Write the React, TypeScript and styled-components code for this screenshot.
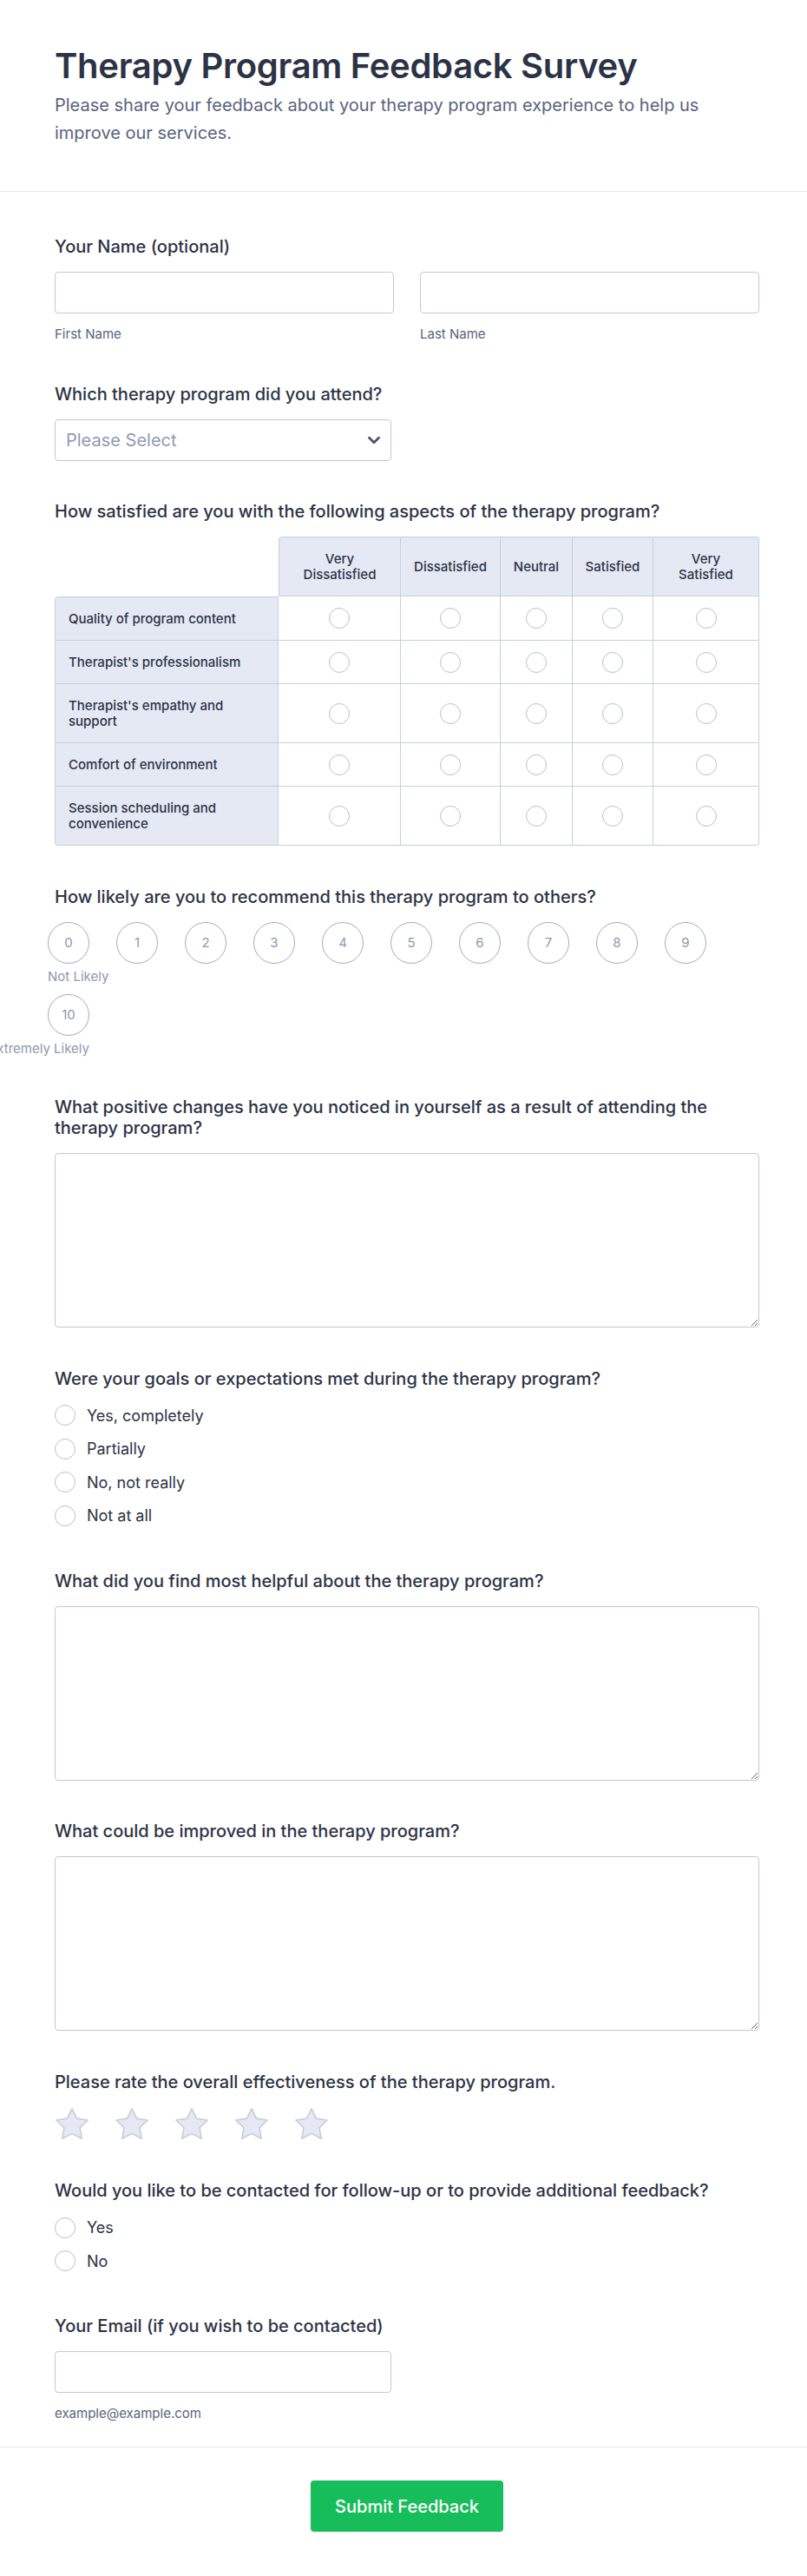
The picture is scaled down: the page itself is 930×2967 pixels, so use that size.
import React from 'react';
import styled, {createGlobalStyle} from 'styled-components';

const GlobalStyle = createGlobalStyle`
  * { box-sizing: border-box; }
  body {
    margin: 0;
    background: #ffffff;
    font-family: Inter, "Noto Sans", "Liberation Sans", sans-serif;
    color: #2c3345;
  }
`;

const Page = styled.div`
  width: 930px;
  background: #ffffff;
`;

const Header = styled.header`
  padding: 52px 55px 51px 63px;
  border-bottom: 1px solid #e3e6ee;
`;

const Title = styled.h1`
  margin: 0;
  font-size: 40px;
  line-height: 48px;
  font-weight: 600;
  letter-spacing: -0.3px;
  color: #2c3345;
`;

const Subtitle = styled.p`
  margin: 5px 0 0;
  font-size: 20px;
  line-height: 32px;
  color: #57647e;
`;

const Form = styled.main`
  display: flex;
  flex-direction: column;
  gap: 46.5px;
  padding: 51px 55px 28px 63px;
`;

const Field = styled.section`
  display: flex;
  flex-direction: column;
`;

const Label = styled.div`
  font-size: 20px;
  line-height: 24px;
  font-weight: 500;
  color: #2c3345;
  margin-bottom: 17px;
`;

const NameRow = styled.div`
  display: grid;
  grid-template-columns: 1fr 1fr;
  gap: 30px;
`;

const Stack = styled.div`
  display: flex;
  flex-direction: column;
`;

const TextInput = styled.input<{$narrow?: boolean}>`
  width: ${(p) => (p.$narrow ? '388px' : '100%')};
  height: 48px;
  padding: 0 12px;
  border: 1px solid #c3c8d6;
  border-radius: 4px;
  font-family: inherit;
  font-size: 18px;
  color: #2c3345;
  background: #fff;
`;

const SubLabel = styled.div`
  margin-top: 14px;
  font-size: 15px;
  line-height: 20px;
  color: #57647e;
`;

const SelectWrap = styled.div`
  position: relative;
  width: 388px;
`;

const Select = styled.select`
  appearance: none;
  width: 100%;
  height: 48px;
  padding: 0 40px 0 12px;
  border: 1px solid #c3c8d6;
  border-radius: 4px;
  background: #fff;
  font-family: inherit;
  font-size: 20px;
  color: #8f9bb0;
`;

const Chevron = styled.svg`
  position: absolute;
  right: 9px;
  top: 13px;
  pointer-events: none;
`;

const Matrix = styled.table`
  width: 100%;
  table-layout: fixed;
  border-collapse: separate;
  border-spacing: 0;
`;

const HeadCell = styled.th<{$first?: boolean; $last?: boolean}>`
  background: #e5e9f4;
  border-top: 1px solid #c8cedf;
  border-right: 1px solid #c8cedf;
  border-bottom: 1px solid #c8cedf;
  border-left: ${(p) => (p.$first ? '1px solid #c8cedf' : 'none')};
  border-top-left-radius: ${(p) => (p.$first ? '4px' : '0')};
  border-top-right-radius: ${(p) => (p.$last ? '4px' : '0')};
  padding: 15.5px 4px;
  font-size: 15px;
  line-height: 18px;
  font-weight: 500;
  color: #2c3345;
  text-align: center;
`;

const Corner = styled.th`
  border: none;
  background: transparent;
`;

const RowLabel = styled.td<{$top?: boolean; $bottom?: boolean}>`
  background: #e5e9f4;
  border-left: 1px solid #c8cedf;
  border-right: 1px solid #c8cedf;
  border-bottom: 1px solid #c8cedf;
  border-top: ${(p) => (p.$top ? '1px solid #c8cedf' : 'none')};
  border-top-left-radius: ${(p) => (p.$top ? '4px' : '0')};
  border-bottom-left-radius: ${(p) => (p.$bottom ? '4px' : '0')};
  padding: 15.5px 15px;
  font-size: 15px;
  line-height: 18px;
  font-weight: 500;
  color: #2c3345;
`;

const RadioCell = styled.td<{$cornerRight?: boolean}>`
  border-right: 1px solid #c8cedf;
  border-bottom: 1px solid #c8cedf;
  border-bottom-right-radius: ${(p) => (p.$cornerRight ? '4px' : '0')};
  text-align: center;
  vertical-align: middle;
  padding: 0;
`;

const Radio = styled.span`
  display: inline-block;
  flex: none;
  width: 24px;
  height: 24px;
  border-radius: 50%;
  border: 1px solid #b9c0cf;
  background: #fff;
  vertical-align: middle;
`;

const Scale = styled.div`
  display: flex;
  flex-wrap: wrap;
  gap: 11px 31px;
  margin-left: -8px;
`;

const ScaleItem = styled.div<{$align: string}>`
  width: 48px;
  display: flex;
  flex-direction: column;
  align-items: ${(p) => p.$align};
`;

const ScaleCircle = styled.div`
  width: 48px;
  height: 48px;
  border-radius: 50%;
  border: 1px solid #a3acc0;
  display: flex;
  align-items: center;
  justify-content: center;
  font-size: 15px;
  color: #8d99ad;
`;

const ScaleHint = styled.div`
  margin-top: 6px;
  font-size: 15px;
  line-height: 18px;
  white-space: nowrap;
  color: #8d99ad;
`;

const TextArea = styled.textarea`
  display: block;
  width: 100%;
  height: 201px;
  padding: 10px 12px;
  border: 1px solid #c3c8d6;
  border-radius: 4px;
  resize: vertical;
  font-family: inherit;
  font-size: 18px;
`;

const RadioList = styled.div`
  display: flex;
  flex-direction: column;
  gap: 11.5px;
  padding-bottom: 3px;
`;

const RadioOption = styled.label`
  display: flex;
  align-items: center;
  gap: 13px;
  font-size: 18px;
  line-height: 27px;
  color: #2c3345;
`;

const Stars = styled.div`
  display: flex;
  gap: 29px;
`;

const Footer = styled.footer`
  display: flex;
  justify-content: center;
  padding: 38px 55px 49px 63px;
  border-top: 1px solid #e6e9f0;
`;

const SubmitButton = styled.button`
  height: 59px;
  padding: 0 28px;
  border: none;
  border-radius: 4px;
  background: #18bd5b;
  color: #ffffff;
  font-family: inherit;
  font-size: 20px;
  font-weight: 500;
`;

const columns = [
  {lines: ['Very', 'Dissatisfied'], width: 141},
  {lines: ['Dissatisfied'], width: 115},
  {lines: ['Neutral'], width: 83},
  {lines: ['Satisfied'], width: 93},
  {lines: ['Very', 'Satisfied'], width: 122},
];

const aspects = [
  'Quality of program content',
  "Therapist's professionalism",
  "Therapist's empathy and support",
  'Comfort of environment',
  'Session scheduling and convenience',
];

const goalOptions = ['Yes, completely', 'Partially', 'No, not really', 'Not at all'];

function Star() {
  return (
    <svg width="40" height="38" viewBox="1 1 22 21">
      <path
        d="M12 2l3.09 6.26L22 9.27l-5 4.87 1.18 6.88L12 17.77l-6.18 3.25L7 14.14 2 9.27l6.91-1.01L12 2z"
        fill="#e6e9f3"
        stroke="#c6ccdc"
        strokeWidth="0.9"
        strokeLinejoin="round"
      />
    </svg>
  );
}

export default function App() {
  return (
    <Page>
      <GlobalStyle />
      <Header>
        <Title>Therapy Program Feedback Survey</Title>
        <Subtitle>
          Please share your feedback about your therapy program experience to help us improve our
          services.
        </Subtitle>
      </Header>

      <Form>
        <Field>
          <Label>Your Name (optional)</Label>
          <NameRow>
            <Stack>
              <TextInput type="text" />
              <SubLabel>First Name</SubLabel>
            </Stack>
            <Stack>
              <TextInput type="text" />
              <SubLabel>Last Name</SubLabel>
            </Stack>
          </NameRow>
        </Field>

        <Field>
          <Label>Which therapy program did you attend?</Label>
          <SelectWrap>
            <Select defaultValue="">
              <option value="">Please Select</option>
            </Select>
            <Chevron width="22" height="22" viewBox="0 0 24 24" fill="none">
              <path d="m6 9 6 6 6-6" stroke="#4a5468" strokeWidth="3" strokeLinecap="round" strokeLinejoin="round" />
            </Chevron>
          </SelectWrap>
        </Field>

        <Field>
          <Label>How satisfied are you with the following aspects of the therapy program?</Label>
          <Matrix>
            <colgroup>
              <col style={{width: 258}} />
              {columns.map((c) => (
                <col key={c.lines.join(' ')} style={{width: c.width}} />
              ))}
            </colgroup>
            <thead>
              <tr>
                <Corner />
                {columns.map((c, i) => (
                  <HeadCell key={c.lines.join(' ')} $first={i === 0} $last={i === columns.length - 1}>
                    {c.lines.map((line, j) => (
                      <React.Fragment key={line}>
                        {j > 0 && <br />}
                        {line}
                      </React.Fragment>
                    ))}
                  </HeadCell>
                ))}
              </tr>
            </thead>
            <tbody>
              {aspects.map((aspect, r) => (
                <tr key={aspect}>
                  <RowLabel $top={r === 0} $bottom={r === aspects.length - 1}>
                    {aspect}
                  </RowLabel>
                  {columns.map((c, i) => (
                    <RadioCell
                      key={c.lines.join(' ')}
                      $cornerRight={r === aspects.length - 1 && i === columns.length - 1}
                    >
                      <Radio />
                    </RadioCell>
                  ))}
                </tr>
              ))}
            </tbody>
          </Matrix>
        </Field>

        <Field>
          <Label>How likely are you to recommend this therapy program to others?</Label>
          <Scale>
            {Array.from({length: 11}, (_, n) => (
              <ScaleItem key={n} $align={n === 10 ? 'flex-end' : 'flex-start'}>
                <ScaleCircle>{n}</ScaleCircle>
                {n === 0 && <ScaleHint>Not Likely</ScaleHint>}
                {n === 10 && <ScaleHint>Extremely Likely</ScaleHint>}
              </ScaleItem>
            ))}
          </Scale>
        </Field>

        <Field>
          <Label>
            What positive changes have you noticed in yourself as a result of attending the therapy
            program?
          </Label>
          <TextArea />
        </Field>

        <Field>
          <Label>Were your goals or expectations met during the therapy program?</Label>
          <RadioList>
            {goalOptions.map((o) => (
              <RadioOption key={o}>
                <Radio />
                {o}
              </RadioOption>
            ))}
          </RadioList>
        </Field>

        <Field>
          <Label>What did you find most helpful about the therapy program?</Label>
          <TextArea />
        </Field>

        <Field>
          <Label>What could be improved in the therapy program?</Label>
          <TextArea />
        </Field>

        <Field>
          <Label>Please rate the overall effectiveness of the therapy program.</Label>
          <Stars>
            {[1, 2, 3, 4, 5].map((s) => (
              <Star key={s} />
            ))}
          </Stars>
        </Field>

        <Field>
          <Label>Would you like to be contacted for follow-up or to provide additional feedback?</Label>
          <RadioList>
            {['Yes', 'No'].map((o) => (
              <RadioOption key={o}>
                <Radio />
                {o}
              </RadioOption>
            ))}
          </RadioList>
        </Field>

        <Field>
          <Label>Your Email (if you wish to be contacted)</Label>
          <TextInput type="email" $narrow />
          <SubLabel>example@example.com</SubLabel>
        </Field>
      </Form>

      <Footer>
        <SubmitButton type="button">Submit Feedback</SubmitButton>
      </Footer>
    </Page>
  );
}
